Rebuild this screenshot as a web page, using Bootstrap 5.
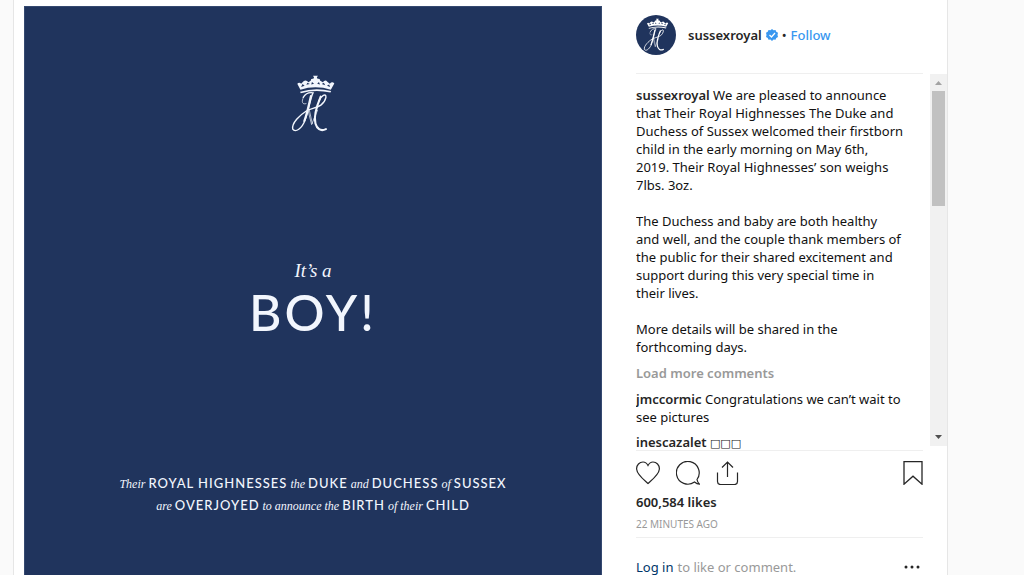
<!DOCTYPE html>
<html lang="en">
<head>
<meta charset="utf-8">
<meta name="viewport" content="width=device-width, initial-scale=1">
<title>sussexroyal</title>
<link href="https://cdn.jsdelivr.net/npm/bootstrap@5.3.0/dist/css/bootstrap.min.css" rel="stylesheet">
<style>
body{background:#fafafa;color:#262626;font-family:"Noto Sans","Open Sans",sans-serif;font-size:13px;line-height:18px}
a{text-decoration:none}
b{font-weight:600}
.post{margin:0 76px 0 13px;border:solid #e6e6e6;border-width:0 1px;height:100vh;min-height:400px}
.photo{background:#20345d;color:#f2f6fd;margin:6px 0 0 10px;padding-top:68px;border:1px solid #354970;border-width:1px 1px 0}
.mono{width:48px;height:58px}
.serif-line{font:italic 19px/24px "Liberation Serif",serif;margin-top:126px}
.boy{font:500 50px/58px Lato,sans-serif;letter-spacing:3px;margin:0}
.caption{font:italic 12px/22px "Liberation Serif",serif;margin-top:132px}
.caption span{font:500 13px/20px Lato,sans-serif;letter-spacing:1px}
.side{width:345px;padding-left:34px}
.inset{margin-right:24px}
.rule{border-color:#efefef!important}
.head{height:74px;padding-top:15px;padding-bottom:18px}
.avatar{width:40px;height:40px;background:#20345d;color:#fff}
.avatar svg{width:26px;height:34px}
.user{color:#262626;font-weight:600}
.follow{color:#3897f0;font-size:13px;line-height:18px;font-weight:500}
.thread{height:376px}
.words{padding:12px 18px 0 0;color:#111}
.para{margin-bottom:18px}
.more{color:#999;font-weight:600;line-height:18px}
.track{width:17px;background:#f1f1f1;margin-bottom:4px}
.thumb{width:13px;height:115px;background:#c1c1c1}
.tofu{font:11px/16px "DejaVu Sans",sans-serif}
.last-comment{line-height:16px}
.time{font-size:10px;color:#999;line-height:18px}
.login{color:#003569}
.icons{padding-top:6px}
.icons svg{display:block}
.muted{color:#999}
</style>
</head>
<body class="overflow-hidden">
<svg class="d-none" aria-hidden="true">
<symbol id="monogram" viewBox="63 48 130 166">
<g fill="currentColor">
<path d="M91 96Q135 82 180 94L178 98Q135 88 93 100Z"/>
<path fill-rule="evenodd" d="M92 90L83 73Q89 67 94 73L101 66Q108 60 115 69L122 64Q120 58 129 59L131 55L128 50H142L139 55L141 59Q150 58 148 64L156 69Q163 60 169 67L176 73Q183 65 189 72L179 90Q135 76 92 90ZM94 82L104 79 98 74ZM109 76L119 74 112 70ZM123 75L131 73 125 68ZM140 73L148 75 145 68ZM153 74L163 77 159 70ZM168 79L177 82 174 75Z"/>
</g>
<g fill="none" stroke="currentColor" stroke-width="4" stroke-linecap="round">
<path d="M100 112Q110 96 128 99C120 115 117 145 106 175C97 202 77 214 70 203C66 186 91 162 109 151C128 140 158 143 165 112C166 98 151 108 145 122"/>
<path stroke-width="6" d="M150 110C139 136 129 166 135 187C139 201 149 211 165 203"/>
<path stroke-width="6" d="M122 108C116 133 111 159 103 180"/>
<path stroke-width="2" d="M101 112C94 123 97 134 108 130M113 146L124 190L141 149M117 146L126 187"/>
</g>
</symbol>
</svg>
<main class="post bg-white d-flex">
<section class="photo flex-grow-1 text-center" aria-label="Birth announcement">
<svg class="mono d-block mx-auto" role="img" aria-label="Royal monogram"><use href="#monogram"/></svg>
<p class="serif-line mb-0">It’s a</p>
<h1 class="boy">BOY!</h1>
<p class="caption mb-0">Their <span>ROYAL HIGHNESSES</span> the <span>DUKE</span> and <span>DUCHESS</span> of <span>SUSSEX</span><br>are <span>OVERJOYED</span> to announce the <span>BIRTH</span> of their <span>CHILD</span></p>
</section>
<aside class="side flex-shrink-0">
<header class="head inset rule border-bottom d-flex align-items-center">
<div class="avatar rounded-circle d-flex align-items-center justify-content-center me-2"><svg aria-hidden="true"><use href="#monogram"/></svg></div>
<a class="user ms-1" href="#">sussexroyal</a>
<svg class="ms-1" width="12" height="12" viewBox="0 0 24 24" role="img" aria-label="Verified"><path fill="#3897f0" d="M12 0l3 2.500 4-.5 1.500 3.500 3.500 2-1 4.500 1 4-3.500 2-1.500 3.500-4-.5-3 3-3-3-4 .5L3.500 18 0 16l1-4-1-4.500 3.500-2L5 2l4 .5z"/><path d="M7 12l4 4 7-8" fill="none" stroke="#fff" stroke-width="2.500"/></svg>
<span class="mx-1">•</span>
<button class="follow btn btn-link p-0 border-0 text-decoration-none">Follow</button>
</header>
<div class="thread d-flex overflow-hidden">
<div class="words flex-grow-1">
<p class="para"><a class="user" href="#">sussexroyal</a> We are pleased to announce<br>that Their Royal Highnesses The Duke and<br>Duchess of Sussex welcomed their firstborn<br>child in the early morning on May 6th,<br>2019. Their Royal Highnesses’ son weighs<br>7lbs. 3oz.</p>
<p class="para">The Duchess and baby are both healthy<br>and well, and the couple thank members of<br>the public for their shared excitement and<br>support during this very special time in<br>their lives.</p>
<p class="mb-2">More details will be shared in the<br>forthcoming days.</p>
<button class="more d-block bg-transparent border-0 p-0 mb-2">Load more comments</button>
<p class="mb-2"><a class="user" href="#">jmccormic</a> Congratulations we can’t wait to<br>see pictures</p>
<p class="last-comment mb-0"><a class="user" href="#">inescazalet</a> <span class="tofu">□□□</span></p>
</div>
<div class="track flex-shrink-0 d-flex flex-column align-items-center" aria-hidden="true">
<svg width="17" height="17"><path d="M5 11h7L8.500 7z" fill="#a3a3a3"/></svg>
<div class="thumb"></div>
<svg class="mt-auto" width="17" height="17"><path d="M5 6h7L8.500 10z" fill="#505050"/></svg>
</div>
</div>
<div class="icons inset rule border-top d-flex mb-2">
<button class="bg-transparent border-0 p-0 pt-1 me-3" aria-label="Like"><svg width="24" height="24" viewBox="0 0 24 24" fill="none" stroke="#262626" stroke-width="1.200"><path d="M12 22.500C10 20.500 1 14 .6 8 .5 4 3.500 1 7 1c2.500 0 4 1.500 5 3.500C13 2.500 14.500 1 17 1c3.500 0 6.500 3 6.400 7C23 14 14 20.500 12 22.500z"/></svg></button>
<button class="bg-transparent border-0 p-0 pt-1 me-3" aria-label="Comment"><svg width="24" height="24" viewBox="0 0 24 24" fill="none" stroke="#262626" stroke-width="1.200"><path d="M21 18.500A11.400 11.400 0 1 0 18.500 21q2.500 2 5 2.200-2-1.700-2.500-4.700z"/></svg></button>
<button class="bg-transparent border-0 p-0 pt-1" aria-label="Share"><svg width="24" height="24" viewBox="0 0 24 24" fill="none" stroke="#262626" stroke-width="1.200"><path d="M1.500 11.500v9q0 3 3 3h14q3 0 3-3v-9M11.500 16V1M6 6.500L11.500 1 17 6.500"/></svg></button>
<button class="bg-transparent border-0 p-0 pt-1 ms-auto" aria-label="Save"><svg width="20" height="24" viewBox="0 0 20 24" fill="none" stroke="#262626" stroke-width="1.300"><path d="M1 .7h18v22.500l-9-8-9 8z"/></svg></button>
</div>
<div><b>600,584 likes</b></div>
<div class="time inset rule border-bottom py-1 mb-3">22 MINUTES AGO</div>
<div class="inset d-flex align-items-center pt-1"><a class="login me-1" href="#">Log in</a><span class="muted">to like or comment.</span>
<button class="d-flex bg-transparent border-0 p-0 ms-auto" aria-label="More options"><svg width="20" height="6" viewBox="0 0 20 6" fill="#262626"><circle cx="3" cy="3" r="1.500"/><circle cx="9" cy="3" r="1.500"/><circle cx="15" cy="3" r="1.500"/></svg></button></div>
</aside>
</main>
<script src="https://cdn.jsdelivr.net/npm/bootstrap@5.3.0/dist/js/bootstrap.bundle.min.js"></script>
</body>
</html>
